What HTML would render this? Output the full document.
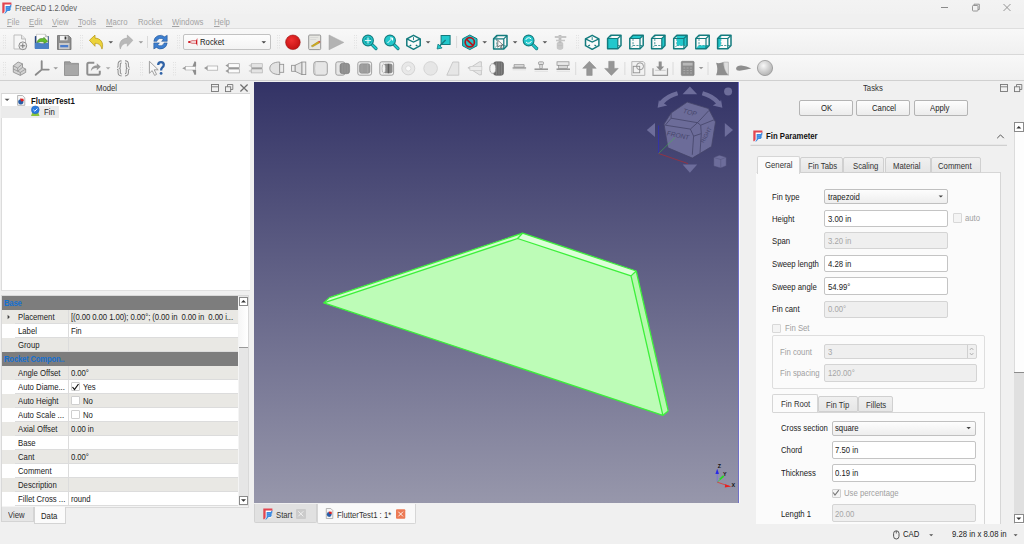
<!DOCTYPE html>
<html><head><meta charset="utf-8">
<style>
*{box-sizing:border-box;margin:0;padding:0}
html,body{width:1024px;height:544px;overflow:hidden;background:#f0f0f0;font-family:"Liberation Sans",sans-serif;font-size:8px;color:#1e1e1e}
.a{position:absolute}
.t{position:absolute;white-space:nowrap;line-height:10px;font-size:9px;transform:scaleX(0.86);transform-origin:0 0}
svg{position:absolute;overflow:visible}
#title{left:0;top:0;width:1024px;height:14px;background:linear-gradient(#f3f3f3,#f1f1f1)}
#menu{left:0;top:14px;width:1024px;height:15px;background:#f0f0f0;border-bottom:1px solid #dedede}
.menu{color:#a3a3a3;top:17.4px}
.menu u{text-decoration:underline;text-decoration-thickness:1px;text-underline-offset:0.6px}
#tb1{left:0;top:29px;width:1024px;height:26px;background:linear-gradient(#f8f8f8,#f0f0f0);border-bottom:1px solid #d8d8d8}
#tb2{left:0;top:55px;width:1024px;height:26px;background:linear-gradient(#f8f8f8,#f0f0f0);border-bottom:1px solid #d0d0d0}

</style></head><body>
<div id="title" class="a"></div>
<svg style="left:2px;top:2px" width="11" height="12" viewBox="0 0 11 12">
<rect x="2.4" y="2.4" width="6" height="7.2" fill="#fff"/>
<path d="M0.3 0.4H9.4V3.2L8.4 2.6H2.6V9.4L1.3 11.2H0.3Z" fill="#e24550"/>
<path d="M3.6 4H7.6L9.2 2.2 9.4 4.4 8.2 5.4H9.4L8 7.2H9.2L7.6 9H5.6L3.2 11.4H2.2L3.6 9.6Z" fill="#3b8ae0"/><path d="M4.6 5.6h2.6M4.6 7.6h2" stroke="#6aaaf0" stroke-width="0.6"/>
</svg>
<div class="t" style="left:14.6px;top:3.2px;color:#5a5a5a;transform:scaleX(0.83)">FreeCAD 1.2.0dev</div>
<svg style="left:0;top:0" width="1024" height="14">
<path d="M941 7.5h7" stroke="#8a8a8a" stroke-width="1"/>
<rect x="972.5" y="5.5" width="5.5" height="5.5" fill="none" stroke="#8a8a8a" stroke-width="0.9" rx="0.8"/>
<path d="M974 5.5v-1.3h5.3v5.3h-1.3" fill="none" stroke="#8a8a8a" stroke-width="0.9"/>
<path d="M1003.5 4l7 7M1010.5 4l-7 7" stroke="#8a8a8a" stroke-width="0.9"/>
</svg>
<div id="menu" class="a"></div>
<div class="t menu" style="left:6.6px"><u>F</u>ile</div>
<div class="t menu" style="left:28.5px"><u>E</u>dit</div>
<div class="t menu" style="left:51.5px"><u>V</u>iew</div>
<div class="t menu" style="left:77.5px"><u>T</u>ools</div>
<div class="t menu" style="left:106px"><u>M</u>acro</div>
<div class="t menu" style="left:138.2px">Rocket</div>
<div class="t menu" style="left:171.5px"><u>W</u>indows</div>
<div class="t menu" style="left:213.5px"><u>H</u>elp</div>
<div id="tb1" class="a"></div><div id="tb2" class="a"></div>
<div class="a" style="left:183px;top:34px;width:88px;height:15.5px;border:1px solid #c2c2c2;border-radius:2px;background:linear-gradient(#fdfdfd,#f3f3f3)"></div>
<svg style="left:187.5px;top:37px" width="10" height="10"><path d="M0.5 5L4 3.8h4.5V6.2H4z" fill="#fff" stroke="#c0141c" stroke-width="0.7"/><path d="M8 3.8L9.3 1v8L8 6.2z" fill="#d0141c"/><circle cx="1.2" cy="5" r="1" fill="#d0141c"/></svg>
<div class="t" style="left:199.5px;top:37px;color:#222">Rocket</div>
<svg style="left:0;top:0" width="1024" height="82"><rect x="3" y="35" width="0.8" height="0.8" fill="#d6d6d6"/><rect x="5" y="35" width="0.8" height="0.8" fill="#d6d6d6"/><rect x="3" y="37.5" width="0.8" height="0.8" fill="#d6d6d6"/><rect x="5" y="37.5" width="0.8" height="0.8" fill="#d6d6d6"/><rect x="3" y="40.0" width="0.8" height="0.8" fill="#d6d6d6"/><rect x="5" y="40.0" width="0.8" height="0.8" fill="#d6d6d6"/><rect x="3" y="42.5" width="0.8" height="0.8" fill="#d6d6d6"/><rect x="5" y="42.5" width="0.8" height="0.8" fill="#d6d6d6"/><rect x="3" y="45.0" width="0.8" height="0.8" fill="#d6d6d6"/><rect x="5" y="45.0" width="0.8" height="0.8" fill="#d6d6d6"/><rect x="3" y="47.5" width="0.8" height="0.8" fill="#d6d6d6"/><rect x="5" y="47.5" width="0.8" height="0.8" fill="#d6d6d6"/><g transform="translate(13,34.5) scale(1.0)"><path d="M1 0.5h7.5l4 4V14.5H1z" fill="#f6f6f6" stroke="#b8b8b8" stroke-width="0.9"/><path d="M8.5 0.5v4h4" fill="#e4e4e4" stroke="#b8b8b8" stroke-width="0.9"/><circle cx="9.8" cy="11.3" r="3.9" fill="#eee" stroke="#8c8c8c" stroke-width="1"/><path d="M9.8 8.8v5M7.3 11.3h5" stroke="#777" stroke-width="1"/></g><g transform="translate(34.5,34.5) scale(1.0)"><rect x="0.3" y="1.4" width="14" height="13" rx="0.8" fill="#1f3f7a"/><path d="M1.9 -0.2H10.8L13.4 2.4V9H1.9Z" fill="#fdfdfd" stroke="#a8a8a8" stroke-width="0.5"/><path d="M10.8 -0.2V2.4H13.4" fill="#d0d0d0" stroke="#999" stroke-width="0.4"/><path d="M2.2 8.8C2.8 4.8 6 3.4 9 4.2L9.4 2.8 13.2 6.8 9.6 9.4 9.4 7.6C7 6.8 4.5 7.2 2.2 8.8Z" fill="#62bd2c" stroke="#2d6a10" stroke-width="0.5"/><path d="M0.4 8.4Q3 7.4 5.2 8.6T9.6 9T14.3 8.4V14.4H0.4Z" fill="#4a80c6"/></g><g transform="translate(57,35.0) scale(1.0)"><path d="M0.5 0.5h11l2.5 2.5v11.5H0.5z" fill="#8e8e8e" stroke="#6e6e6e" stroke-width="0.8"/><rect x="3" y="0.8" width="7.5" height="4.5" fill="#f4f4f4"/><rect x="7.6" y="1.5" width="1.8" height="3" fill="#333"/><rect x="2" y="8" width="10.5" height="6.2" fill="#c9c9c9"/><rect x="3.2" y="10" width="8" height="2.3" fill="#4a7ccc"/></g><rect x="80" y="35" width="0.8" height="0.8" fill="#d6d6d6"/><rect x="82" y="35" width="0.8" height="0.8" fill="#d6d6d6"/><rect x="80" y="37.5" width="0.8" height="0.8" fill="#d6d6d6"/><rect x="82" y="37.5" width="0.8" height="0.8" fill="#d6d6d6"/><rect x="80" y="40.0" width="0.8" height="0.8" fill="#d6d6d6"/><rect x="82" y="40.0" width="0.8" height="0.8" fill="#d6d6d6"/><rect x="80" y="42.5" width="0.8" height="0.8" fill="#d6d6d6"/><rect x="82" y="42.5" width="0.8" height="0.8" fill="#d6d6d6"/><rect x="80" y="45.0" width="0.8" height="0.8" fill="#d6d6d6"/><rect x="82" y="45.0" width="0.8" height="0.8" fill="#d6d6d6"/><rect x="80" y="47.5" width="0.8" height="0.8" fill="#d6d6d6"/><rect x="82" y="47.5" width="0.8" height="0.8" fill="#d6d6d6"/><g transform="translate(88.8,34.5) scale(1.0)"><path d="M0.6 5.8L6.2 0.6V3.6C11.5 3.8 15.5 8 13.2 14.6 12 10.6 10 8.8 6.2 8.8V11.8z" fill="#ecd33a" stroke="#b39312" stroke-width="0.7" stroke-linejoin="round"/></g><path d="M108.5 41.2h4.6l-2.3 2.2z" fill="#555"/><g transform="translate(118.5,34.5) scale(1.0)"><path d="M14.4 5.8L8.8 0.6V3.6C3.5 3.8-0.5 8 1.8 14.6 3 10.6 5 8.8 8.8 8.8V11.8z" fill="#b9b9b9" stroke="#a0a0a0" stroke-width="0.5" stroke-linejoin="round"/></g><path d="M138.6 41.2h4.6l-2.3 2.2z" fill="#9a9a9a"/><path d="M147.5 36V48" stroke="#dadada" stroke-width="1"/><g transform="translate(153,34.5) scale(1.0)"><path d="M0.8 6.8A6.6 6.6 0 0 1 11.6 2.3L14.2 0.8V6.8H8.6L10.4 5A4 4 0 0 0 3.8 6.8Z" fill="#3d7fd0" stroke="#1e4f90" stroke-width="0.55" stroke-linejoin="round"/><path d="M14.2 8.4A6.6 6.6 0 0 1 3.4 12.9L0.8 14.4V8.4H6.4L4.6 10.2A4 4 0 0 0 11.2 8.4Z" fill="#3d7fd0" stroke="#1e4f90" stroke-width="0.55" stroke-linejoin="round"/></g><rect x="177" y="35" width="0.8" height="0.8" fill="#d6d6d6"/><rect x="179" y="35" width="0.8" height="0.8" fill="#d6d6d6"/><rect x="177" y="37.5" width="0.8" height="0.8" fill="#d6d6d6"/><rect x="179" y="37.5" width="0.8" height="0.8" fill="#d6d6d6"/><rect x="177" y="40.0" width="0.8" height="0.8" fill="#d6d6d6"/><rect x="179" y="40.0" width="0.8" height="0.8" fill="#d6d6d6"/><rect x="177" y="42.5" width="0.8" height="0.8" fill="#d6d6d6"/><rect x="179" y="42.5" width="0.8" height="0.8" fill="#d6d6d6"/><rect x="177" y="45.0" width="0.8" height="0.8" fill="#d6d6d6"/><rect x="179" y="45.0" width="0.8" height="0.8" fill="#d6d6d6"/><rect x="177" y="47.5" width="0.8" height="0.8" fill="#d6d6d6"/><rect x="179" y="47.5" width="0.8" height="0.8" fill="#d6d6d6"/><rect x="277" y="35" width="0.8" height="0.8" fill="#d6d6d6"/><rect x="279" y="35" width="0.8" height="0.8" fill="#d6d6d6"/><rect x="277" y="37.5" width="0.8" height="0.8" fill="#d6d6d6"/><rect x="279" y="37.5" width="0.8" height="0.8" fill="#d6d6d6"/><rect x="277" y="40.0" width="0.8" height="0.8" fill="#d6d6d6"/><rect x="279" y="40.0" width="0.8" height="0.8" fill="#d6d6d6"/><rect x="277" y="42.5" width="0.8" height="0.8" fill="#d6d6d6"/><rect x="279" y="42.5" width="0.8" height="0.8" fill="#d6d6d6"/><rect x="277" y="45.0" width="0.8" height="0.8" fill="#d6d6d6"/><rect x="279" y="45.0" width="0.8" height="0.8" fill="#d6d6d6"/><rect x="277" y="47.5" width="0.8" height="0.8" fill="#d6d6d6"/><rect x="279" y="47.5" width="0.8" height="0.8" fill="#d6d6d6"/><defs><radialGradient id="rg" cx="0.4" cy="0.35" r="0.7"><stop offset="0" stop-color="#f03030"/><stop offset="1" stop-color="#c01010"/></radialGradient><linearGradient id="gg" x1="0" y1="0" x2="0" y2="1"><stop offset="0" stop-color="#fdfdfd"/><stop offset="1" stop-color="#f0f0f0"/></linearGradient><radialGradient id="sph" cx="0.4" cy="0.35" r="0.75"><stop offset="0" stop-color="#f8f8f8"/><stop offset="1" stop-color="#a9a9a9"/></radialGradient></defs><circle cx="292.9" cy="42.3" r="7.3" fill="url(#rg)" stroke="#9a1010" stroke-width="0.6"/><g transform="translate(308.2,34.5) scale(1.0)"><rect x="0.5" y="0.5" width="12" height="14.6" rx="1" fill="#e7e7e2" stroke="#8b8b8b" stroke-width="0.9"/><path d="M2 3h8M2 5h6" stroke="#cfcfcf" stroke-width="0.6"/><path d="M3 11.5l7-4.5 1.5 1.3-7 4z" fill="#d4b21a" stroke="#8a6a00" stroke-width="0.4"/><path d="M10 7l1-0.7 1.3 1.2-0.8 0.8z" fill="#d33"/></g><path d="M329 35V49.8L343.8 42.4z" fill="#b3b3b3" stroke="#a4a4a4" stroke-width="0.5"/><rect x="354" y="35" width="0.8" height="0.8" fill="#d6d6d6"/><rect x="356" y="35" width="0.8" height="0.8" fill="#d6d6d6"/><rect x="354" y="37.5" width="0.8" height="0.8" fill="#d6d6d6"/><rect x="356" y="37.5" width="0.8" height="0.8" fill="#d6d6d6"/><rect x="354" y="40.0" width="0.8" height="0.8" fill="#d6d6d6"/><rect x="356" y="40.0" width="0.8" height="0.8" fill="#d6d6d6"/><rect x="354" y="42.5" width="0.8" height="0.8" fill="#d6d6d6"/><rect x="356" y="42.5" width="0.8" height="0.8" fill="#d6d6d6"/><rect x="354" y="45.0" width="0.8" height="0.8" fill="#d6d6d6"/><rect x="356" y="45.0" width="0.8" height="0.8" fill="#d6d6d6"/><rect x="354" y="47.5" width="0.8" height="0.8" fill="#d6d6d6"/><rect x="356" y="47.5" width="0.8" height="0.8" fill="#d6d6d6"/><g transform="translate(362,34.5) scale(1.0)"><path d="M9.8 9.8L14 14" stroke="#137b7e" stroke-width="3.2" stroke-linecap="round"/><path d="M9.8 9.8L14 14" stroke="#22c8cc" stroke-width="1.8" stroke-linecap="round"/><circle cx="6" cy="6" r="5.4" fill="#22c8cc" stroke="#137b7e" stroke-width="1.1"/><circle cx="6" cy="6" r="3.2" fill="none" stroke="#0e6a6a" stroke-width="0.5"/><path d="M6 2.8v6.4M2.8 6h6.4" stroke="#eafafa" stroke-width="0.9"/></g><g transform="translate(384,34.5) scale(1.0)"><path d="M9.8 9.8L14 14" stroke="#137b7e" stroke-width="3.2" stroke-linecap="round"/><path d="M9.8 9.8L14 14" stroke="#22c8cc" stroke-width="1.8" stroke-linecap="round"/><circle cx="6" cy="6" r="5.4" fill="#22c8cc" stroke="#137b7e" stroke-width="1.1"/><path d="M3.5 8.5L8.5 3.5M6 3.5h2.5V6" stroke="#fff" stroke-width="1" fill="none"/></g><g transform="translate(406,34.5) scale(1.0)"><polygon points="7.5,0.8 14.2,4.4 14.2,11.2 7.5,14.8 0.8,11.2 0.8,4.4" fill="#fafafa" stroke="#137b7e" stroke-width="1.5" stroke-linejoin="round"/><path d="M0.8 4.4L7.5 7.6L14.2 4.4" fill="none" stroke="#137b7e" stroke-width="1.2"/><path d="M7.5 2.6v3" stroke="#137b7e" stroke-width="0.9"/><path d="M3.6 11.6L5.2 10.4M11.4 11.6L9.8 10.4" stroke="#137b7e" stroke-width="1.3"/></g><path d="M425.8 41.2h4.6l-2.3 2.2z" fill="#555"/><g transform="translate(436.6,34.5) scale(1.0)"><rect x="4.5" y="1" width="9" height="9" fill="#22c8cc" stroke="#137b7e" stroke-width="1"/><path d="M9 5.5L3 11.5" stroke="#137b7e" stroke-width="1.3"/><path d="M0.5 14.5l1-5 4 4z" fill="#22c8cc" stroke="#137b7e" stroke-width="0.8"/></g><path d="M456.6 36V48" stroke="#dadada" stroke-width="1"/><g transform="translate(462,34.5) scale(1.0)"><polygon points="7.8,0.5 15,4.3 15,11.3 7.8,15.1 0.6,11.3 0.6,4.3" fill="#22c8cc" stroke="#137b7e" stroke-width="1"/><circle cx="7.8" cy="7.8" r="4.6" fill="none" stroke="#b2151c" stroke-width="1.7"/><path d="M4.6 4.8L11 10.8" stroke="#b2151c" stroke-width="1.7"/></g><path d="M482.4 41.2h4.6l-2.3 2.2z" fill="#555"/><g transform="translate(492.8,34.8) scale(1.0)"><polygon points="0.8,4 4,0.8 14.2,0.8 14.2,11 11,14.2 0.8,14.2" fill="#fafafa"/><path d="M4 0.8V11H14.2M4 11L0.8 14.2" fill="none" stroke="#137b7e" stroke-width="0.75" stroke-dasharray="2.2 1.2"/><path d="M0.8 4H11V14.2M11 4L14.2 0.8" fill="none" stroke="#137b7e" stroke-width="1.2"/><polygon points="0.8,4 4,0.8 14.2,0.8 14.2,11 11,14.2 0.8,14.2" fill="none" stroke="#137b7e" stroke-width="1.5" stroke-linejoin="round"/><path d="M5 5.5v7l1.8-1.8 1.5 3 1-0.5-1.4-2.9h2.5z" fill="#fff" stroke="#333" stroke-width="0.6"/></g><path d="M512.8 41.2h4.6l-2.3 2.2z" fill="#555"/><g transform="translate(522.6,34.5) scale(1.0)"><path d="M9.8 9.8L14 14" stroke="#137b7e" stroke-width="3.2" stroke-linecap="round"/><path d="M9.8 9.8L14 14" stroke="#22c8cc" stroke-width="1.8" stroke-linecap="round"/><circle cx="6" cy="6" r="5.4" fill="#22c8cc" stroke="#137b7e" stroke-width="1.1"/><path d="M3.2 5.5A3 3 0 0 1 8.6 4.6M8.8 6.5A3 3 0 0 1 3.4 7.4" stroke="#fff" stroke-width="1" fill="none"/></g><path d="M542.6 41.2h4.6l-2.3 2.2z" fill="#555"/><g transform="translate(554,34.5) scale(1.0)"><rect x="4.6" y="0.5" width="2.8" height="14.5" fill="#bdbdbd"/><path d="M0.8 1.5h11.5v2H0.8zM2 5.2h9v1.6H2z" fill="#c6c6c6"/><rect x="3.2" y="8" width="5.6" height="6.5" rx="1" fill="#cfcfcf" stroke="#b0b0b0" stroke-width="0.5"/><path d="M3.6 9.5h4.8M3.6 11h4.8M3.6 12.5h4.8" stroke="#aaa" stroke-width="0.4"/></g><rect x="576" y="35" width="0.8" height="0.8" fill="#d6d6d6"/><rect x="578" y="35" width="0.8" height="0.8" fill="#d6d6d6"/><rect x="576" y="37.5" width="0.8" height="0.8" fill="#d6d6d6"/><rect x="578" y="37.5" width="0.8" height="0.8" fill="#d6d6d6"/><rect x="576" y="40.0" width="0.8" height="0.8" fill="#d6d6d6"/><rect x="578" y="40.0" width="0.8" height="0.8" fill="#d6d6d6"/><rect x="576" y="42.5" width="0.8" height="0.8" fill="#d6d6d6"/><rect x="578" y="42.5" width="0.8" height="0.8" fill="#d6d6d6"/><rect x="576" y="45.0" width="0.8" height="0.8" fill="#d6d6d6"/><rect x="578" y="45.0" width="0.8" height="0.8" fill="#d6d6d6"/><rect x="576" y="47.5" width="0.8" height="0.8" fill="#d6d6d6"/><rect x="578" y="47.5" width="0.8" height="0.8" fill="#d6d6d6"/><g transform="translate(584.7,34.5) scale(1.0)"><polygon points="7.5,0.8 14.2,4.4 14.2,11.2 7.5,14.8 0.8,11.2 0.8,4.4" fill="#fafafa" stroke="#137b7e" stroke-width="1.5" stroke-linejoin="round"/><path d="M0.8 4.4L7.5 7.6L14.2 4.4" fill="none" stroke="#137b7e" stroke-width="1.2"/><path d="M7.5 2.6v3" stroke="#137b7e" stroke-width="0.9"/><path d="M3.6 11.6L5.2 10.4M11.4 11.6L9.8 10.4" stroke="#137b7e" stroke-width="1.3"/></g><g transform="translate(606.8,34.5) scale(1.0)"><polygon points="0.8,4 4,0.8 14.2,0.8 14.2,11 11,14.2 0.8,14.2" fill="#fafafa"/><path d="M4 0.8V11H14.2M4 11L0.8 14.2" fill="none" stroke="#137b7e" stroke-width="0.75" stroke-dasharray="2.2 1.2"/><polygon points="0.8,4 11,4 11,14.2 0.8,14.2" fill="#22c8cc"/><path d="M0.8 4H11V14.2M11 4L14.2 0.8" fill="none" stroke="#137b7e" stroke-width="1.2"/><polygon points="0.8,4 4,0.8 14.2,0.8 14.2,11 11,14.2 0.8,14.2" fill="none" stroke="#137b7e" stroke-width="1.5" stroke-linejoin="round"/></g><g transform="translate(629,34.5) scale(1.0)"><polygon points="0.8,4 4,0.8 14.2,0.8 14.2,11 11,14.2 0.8,14.2" fill="#fafafa"/><path d="M4 0.8V11H14.2M4 11L0.8 14.2" fill="none" stroke="#137b7e" stroke-width="0.75" stroke-dasharray="2.2 1.2"/><polygon points="0.8,4 4,0.8 14.2,0.8 11,4" fill="#22c8cc"/><path d="M0.8 4H11V14.2M11 4L14.2 0.8" fill="none" stroke="#137b7e" stroke-width="1.2"/><polygon points="0.8,4 4,0.8 14.2,0.8 14.2,11 11,14.2 0.8,14.2" fill="none" stroke="#137b7e" stroke-width="1.5" stroke-linejoin="round"/></g><g transform="translate(650.8,34.5) scale(1.0)"><polygon points="0.8,4 4,0.8 14.2,0.8 14.2,11 11,14.2 0.8,14.2" fill="#fafafa"/><path d="M4 0.8V11H14.2M4 11L0.8 14.2" fill="none" stroke="#137b7e" stroke-width="0.75" stroke-dasharray="2.2 1.2"/><polygon points="11,4 14.2,0.8 14.2,11 11,14.2" fill="#22c8cc"/><path d="M0.8 4H11V14.2M11 4L14.2 0.8" fill="none" stroke="#137b7e" stroke-width="1.2"/><polygon points="0.8,4 4,0.8 14.2,0.8 14.2,11 11,14.2 0.8,14.2" fill="none" stroke="#137b7e" stroke-width="1.5" stroke-linejoin="round"/></g><g transform="translate(672.9,34.5) scale(1.0)"><polygon points="0.8,4 4,0.8 14.2,0.8 14.2,11 11,14.2 0.8,14.2" fill="#fafafa"/><path d="M4 0.8V11H14.2M4 11L0.8 14.2" fill="none" stroke="#137b7e" stroke-width="0.75" stroke-dasharray="2.2 1.2"/><polygon points="4,0.8 14.2,0.8 14.2,11 4,11" fill="#22c8cc"/><path d="M0.8 4H11V14.2M11 4L14.2 0.8" fill="none" stroke="#137b7e" stroke-width="1.2"/><polygon points="0.8,4 4,0.8 14.2,0.8 14.2,11 11,14.2 0.8,14.2" fill="none" stroke="#137b7e" stroke-width="1.5" stroke-linejoin="round"/></g><g transform="translate(695,34.5) scale(1.0)"><polygon points="0.8,4 4,0.8 14.2,0.8 14.2,11 11,14.2 0.8,14.2" fill="#fafafa"/><path d="M4 0.8V11H14.2M4 11L0.8 14.2" fill="none" stroke="#137b7e" stroke-width="0.75" stroke-dasharray="2.2 1.2"/><polygon points="0.8,14.2 4,11 14.2,11 11,14.2" fill="#22c8cc"/><path d="M0.8 4H11V14.2M11 4L14.2 0.8" fill="none" stroke="#137b7e" stroke-width="1.2"/><polygon points="0.8,4 4,0.8 14.2,0.8 14.2,11 11,14.2 0.8,14.2" fill="none" stroke="#137b7e" stroke-width="1.5" stroke-linejoin="round"/></g><g transform="translate(716.8,34.5) scale(1.0)"><polygon points="0.8,4 4,0.8 14.2,0.8 14.2,11 11,14.2 0.8,14.2" fill="#fafafa"/><path d="M4 0.8V11H14.2M4 11L0.8 14.2" fill="none" stroke="#137b7e" stroke-width="0.75" stroke-dasharray="2.2 1.2"/><polygon points="0.8,4 4,0.8 4,11 0.8,14.2" fill="#22c8cc"/><path d="M0.8 4H11V14.2M11 4L14.2 0.8" fill="none" stroke="#137b7e" stroke-width="1.2"/><polygon points="0.8,4 4,0.8 14.2,0.8 14.2,11 11,14.2 0.8,14.2" fill="none" stroke="#137b7e" stroke-width="1.5" stroke-linejoin="round"/></g><rect x="3" y="62" width="0.8" height="0.8" fill="#d6d6d6"/><rect x="5" y="62" width="0.8" height="0.8" fill="#d6d6d6"/><rect x="3" y="64.5" width="0.8" height="0.8" fill="#d6d6d6"/><rect x="5" y="64.5" width="0.8" height="0.8" fill="#d6d6d6"/><rect x="3" y="67.0" width="0.8" height="0.8" fill="#d6d6d6"/><rect x="5" y="67.0" width="0.8" height="0.8" fill="#d6d6d6"/><rect x="3" y="69.5" width="0.8" height="0.8" fill="#d6d6d6"/><rect x="5" y="69.5" width="0.8" height="0.8" fill="#d6d6d6"/><rect x="3" y="72.0" width="0.8" height="0.8" fill="#d6d6d6"/><rect x="5" y="72.0" width="0.8" height="0.8" fill="#d6d6d6"/><rect x="3" y="74.5" width="0.8" height="0.8" fill="#d6d6d6"/><rect x="5" y="74.5" width="0.8" height="0.8" fill="#d6d6d6"/><g transform="translate(12.7,60.8) scale(1.0)"><path d="M0.6 5L5.4 1.2 9.8 3V6.6L13 8.2V11.6L7.6 14.6 0.6 11.4Z" fill="#d2d2d2" stroke="#8a8a8a" stroke-width="0.8" stroke-linejoin="round"/><path d="M0.6 5L5 7.2 9.8 3M5 7.2V10.4M0.6 8.2L5 10.4 9.8 6.6M5 10.4L7.6 11.6 13 8.2M7.6 11.6V14.6" fill="none" stroke="#8a8a8a" stroke-width="0.7"/></g><g transform="translate(34.7,60.8) scale(1.0)"><path d="M7 0.5V8.8M7 8.8H14M7 8.8L1 14" stroke="#8a8a8a" stroke-width="1.9" stroke-linecap="round"/></g><path d="M53.4 67.2h4.6l-2.3 2.2z" fill="#9a9a9a"/><g transform="translate(64,60.8) scale(1.0)"><path d="M0.5 1h5.5l1.5 1.6h7v12H0.5z" fill="#9e9e9e" stroke="#858585" stroke-width="0.8"/><rect x="0.9" y="4" width="13.6" height="10.2" fill="#a8a8a8"/></g><g transform="translate(86.3,60.8) scale(1.0)"><path d="M8 2H2.5Q1 2 1 3.5v9.5Q1 14 2.5 14h9.5q1.5 0 1.5-1.5V10" fill="none" stroke="#8e8e8e" stroke-width="2"/><path d="M4.5 10.5C5 6 8 4.6 10.5 4.8V2.5L14.5 6 10.5 9.5V7.3C8 7.2 6 8 4.5 10.5z" fill="#9a9a9a"/></g><path d="M105.8 67.2h4.6l-2.3 2.2z" fill="#aaa"/><g transform="translate(116,60.8) scale(1.0)"><path d="M5.5 1Q3.2 1 3.2 3.2V5.8Q3.2 7.5 1 7.5Q3.2 7.5 3.2 9.2V11.8Q3.2 14 5.5 14M9 1Q11.3 1 11.3 3.2V5.8Q11.3 7.5 13.5 7.5Q11.3 7.5 11.3 9.2V11.8Q11.3 14 9 14" fill="none" stroke="#8a8a8a" stroke-width="3.2"/><path d="M5.5 1Q3.2 1 3.2 3.2V5.8Q3.2 7.5 1 7.5Q3.2 7.5 3.2 9.2V11.8Q3.2 14 5.5 14M9 1Q11.3 1 11.3 3.2V5.8Q11.3 7.5 13.5 7.5Q11.3 7.5 11.3 9.2V11.8Q11.3 14 9 14" fill="none" stroke="#eeeeee" stroke-width="1.3"/></g><rect x="140" y="62" width="0.8" height="0.8" fill="#d6d6d6"/><rect x="142" y="62" width="0.8" height="0.8" fill="#d6d6d6"/><rect x="140" y="64.5" width="0.8" height="0.8" fill="#d6d6d6"/><rect x="142" y="64.5" width="0.8" height="0.8" fill="#d6d6d6"/><rect x="140" y="67.0" width="0.8" height="0.8" fill="#d6d6d6"/><rect x="142" y="67.0" width="0.8" height="0.8" fill="#d6d6d6"/><rect x="140" y="69.5" width="0.8" height="0.8" fill="#d6d6d6"/><rect x="142" y="69.5" width="0.8" height="0.8" fill="#d6d6d6"/><rect x="140" y="72.0" width="0.8" height="0.8" fill="#d6d6d6"/><rect x="142" y="72.0" width="0.8" height="0.8" fill="#d6d6d6"/><rect x="140" y="74.5" width="0.8" height="0.8" fill="#d6d6d6"/><rect x="142" y="74.5" width="0.8" height="0.8" fill="#d6d6d6"/><g transform="translate(148.6,60.8) scale(1.0)"><path d="M0.8 0.5v12l2.8-2.7 2.4 4.8 2-1-2.4-4.6h4z" fill="#f6f6f6" stroke="#8a8a8a" stroke-width="0.8"/><path d="M9.6 4.2Q9.6 1.3 12.4 1.3Q15.2 1.3 15.2 4Q15.2 5.8 13.6 6.8Q12.5 7.6 12.5 9.6" fill="none" stroke="#2f62a6" stroke-width="2.3"/><circle cx="12.5" cy="12.6" r="1.4" fill="#2f62a6"/></g><rect x="173" y="62" width="0.8" height="0.8" fill="#d6d6d6"/><rect x="175" y="62" width="0.8" height="0.8" fill="#d6d6d6"/><rect x="173" y="64.5" width="0.8" height="0.8" fill="#d6d6d6"/><rect x="175" y="64.5" width="0.8" height="0.8" fill="#d6d6d6"/><rect x="173" y="67.0" width="0.8" height="0.8" fill="#d6d6d6"/><rect x="175" y="67.0" width="0.8" height="0.8" fill="#d6d6d6"/><rect x="173" y="69.5" width="0.8" height="0.8" fill="#d6d6d6"/><rect x="175" y="69.5" width="0.8" height="0.8" fill="#d6d6d6"/><rect x="173" y="72.0" width="0.8" height="0.8" fill="#d6d6d6"/><rect x="175" y="72.0" width="0.8" height="0.8" fill="#d6d6d6"/><rect x="173" y="74.5" width="0.8" height="0.8" fill="#d6d6d6"/><rect x="175" y="74.5" width="0.8" height="0.8" fill="#d6d6d6"/><g transform="translate(181.8,60.8) scale(1.0)"><path d="M0.4 7.4L3.8 5.6V9.2z" fill="#9a9a9a"/><rect x="3.8" y="5.6" width="10" height="3.6" fill="#fbfbfb" stroke="#a8a8a8" stroke-width="0.6"/><path d="M10.6 5.6L12.8 0.5 14.3 1.2V5.6zM10.6 9.2L12.8 14.3 14.3 13.6V9.2z" fill="#8e8e8e"/></g><g transform="translate(203.6,60.8) scale(1.0)"><path d="M0.4 7.3L3.8 5.2V9.4z" fill="#9a9a9a"/><rect x="3.8" y="5.2" width="10.3" height="4.2" fill="#fbfbfb" stroke="#a8a8a8" stroke-width="0.7"/></g><g transform="translate(225,60.8) scale(1.0)"><path d="M0.4 4.8L3.5 2.9V6.7zM0.4 10.2L3.5 8.3V12.1z" fill="#9a9a9a"/><rect x="3.5" y="2.9" width="10.8" height="3.8" fill="#fbfbfb" stroke="#9e9e9e" stroke-width="0.7"/><rect x="3.5" y="8.3" width="10.8" height="3.8" fill="#fbfbfb" stroke="#9e9e9e" stroke-width="0.7"/><path d="M3.5 7.5h10.8" stroke="#7a7a7a" stroke-width="0.9"/></g><g transform="translate(248,60.8) scale(1.0)"><path d="M0.4 4.8L3.5 2.9V6.7zM0.4 10.2L3.5 8.3V12.1z" fill="#cfcfcf"/><rect x="3.5" y="2.9" width="10.8" height="3.8" fill="#e4e4e4" stroke="#b4b4b4" stroke-width="0.7"/><rect x="3.5" y="8.3" width="10.8" height="3.8" fill="#e4e4e4" stroke="#b4b4b4" stroke-width="0.7"/><path d="M3.5 7.5h10.8" stroke="#858585" stroke-width="0.9"/></g><g transform="translate(269.2,60.8) scale(1.0)"><path d="M10.5 1.2C4 1.2 0.6 4 0.6 7.5S4 13.8 10.5 13.8z" fill="#e2e2e2" stroke="#8d8d8d" stroke-width="0.8"/><rect x="10.5" y="3.5" width="4" height="8" fill="#ececec" stroke="#8d8d8d" stroke-width="0.8"/></g><g transform="translate(291,60.8) scale(1.0)"><path d="M4 4.5L11 1.2V13.8L4 10.5z" fill="#e4e4e4" stroke="#8d8d8d" stroke-width="0.8"/><rect x="0.6" y="4.5" width="3.4" height="6" fill="#ececec" stroke="#8d8d8d" stroke-width="0.8"/><rect x="11" y="1.2" width="3.8" height="12.6" fill="#ececec" stroke="#8d8d8d" stroke-width="0.8"/></g><g transform="translate(313,60.8) scale(1.0)"><rect x="0.8" y="0.8" width="13.5" height="13.6" rx="2.5" fill="#e6e6e6" stroke="#8d8d8d" stroke-width="0.8"/><path d="M2.5 1.2Q0.8 7.5 2.5 14" fill="none" stroke="#bbb" stroke-width="0.6"/></g><g transform="translate(335,60.8) scale(1.0)"><rect x="0.8" y="1" width="9" height="13.4" rx="2" fill="#e6e6e6" stroke="#8d8d8d" stroke-width="0.8"/><rect x="5" y="2.5" width="9.6" height="10.4" rx="2.5" fill="#8e8e8e" stroke="#777" stroke-width="0.6"/><path d="M7.5 3v9.5M10 3v9.5M12.5 3v9.5" stroke="#999" stroke-width="0.5"/></g><g transform="translate(357,60.8) scale(1.0)"><rect x="0.8" y="1" width="13.8" height="13.4" rx="2" fill="#efefef" stroke="#8d8d8d" stroke-width="0.8"/><rect x="2.5" y="3" width="10.5" height="9.4" rx="2" fill="#9c9c9c" stroke="#888" stroke-width="0.6"/><path d="M5 3v9.5M10.5 3v9.5" stroke="#aaa" stroke-width="0.6"/></g><g transform="translate(379,60.8) scale(1.0)"><rect x="0.8" y="1" width="13.8" height="13.4" rx="2" fill="#efefef" stroke="#8d8d8d" stroke-width="0.8"/><rect x="4.5" y="3" width="9" height="9.4" rx="2" fill="#8a8a8a"/><ellipse cx="4.8" cy="7.7" rx="1.8" ry="4.6" fill="#f2f2f2" stroke="#888" stroke-width="0.5"/><path d="M9.5 3v9.5" stroke="#5e5e5e" stroke-width="1.5"/></g><g transform="translate(401,60.8) scale(1.0)"><circle cx="7.3" cy="7.6" r="6.5" fill="#e8e8e8" stroke="#cdcdcd" stroke-width="0.8"/><circle cx="7.3" cy="7.6" r="2.6" fill="#fafafa" stroke="#cdcdcd" stroke-width="0.6"/></g><g transform="translate(423.3,60.8) scale(1.0)"><circle cx="7.3" cy="7.6" r="6.8" fill="#e6e6e6" stroke="#cfcfcf" stroke-width="0.8"/></g><g transform="translate(446,60.8) scale(1.0)"><path d="M0.8 14.4L6.8 1.2h6v13.2z" fill="#e6e6e6" stroke="#c0c0c0" stroke-width="0.8"/></g><g transform="translate(467.4,60.8) scale(1.0)"><path d="M0.5 7L5 5.5 12 1h2V14h-2L5 9.5z" fill="#e6e6e6" stroke="#bdbdbd" stroke-width="0.8"/><rect x="2.5" y="5.5" width="12" height="4" fill="#ececec" stroke="#c4c4c4" stroke-width="0.6"/></g><g transform="translate(489,60.8) scale(1.0)"><rect x="4.5" y="1" width="10" height="13.5" rx="2.5" fill="#6f6f6f" stroke="#5b5b5b" stroke-width="0.6"/><path d="M7.5 1.5v12.5M10 1.5v12.5M12.5 1.5v12.5" stroke="#8e8e8e" stroke-width="0.6"/><ellipse cx="3.8" cy="7.7" rx="3" ry="4.8" fill="#f4f4f4" stroke="#8e8e8e" stroke-width="0.7"/></g><g transform="translate(511.6,60.8) scale(1.0)"><path d="M2.5 3.8h10v2.5h-10z" fill="#dedede" stroke="#8c8c8c" stroke-width="0.7"/><path d="M1 6.5h13.5v1.3H1z" fill="#8e8e8e"/><path d="M1 9h13.5" stroke="#e2e2e2" stroke-width="1"/></g><g transform="translate(533.5,60.8) scale(1.0)"><rect x="5" y="1" width="5" height="2.8" rx="0.8" fill="#e0e0e0" stroke="#8c8c8c" stroke-width="0.7"/><rect x="6.3" y="3.8" width="2.4" height="4" fill="#ddd" stroke="#8c8c8c" stroke-width="0.6"/><path d="M1 8.4h13.5" stroke="#8e8e8e" stroke-width="1.4"/><path d="M1 10.5h13.5" stroke="#e0e0e0" stroke-width="1"/></g><g transform="translate(555.5,60.8) scale(1.0)"><rect x="1.5" y="1" width="12" height="3.5" fill="#e8e8e8" stroke="#8c8c8c" stroke-width="0.7"/><rect x="3" y="4.5" width="9" height="3" fill="#d8d8d8" stroke="#8c8c8c" stroke-width="0.6"/><path d="M1 8.4h13.5" stroke="#8e8e8e" stroke-width="1.4"/><path d="M1 10.5h13.5" stroke="#e0e0e0" stroke-width="1"/></g><path d="M575.7 62V75" stroke="#dadada" stroke-width="1"/><g transform="translate(582.7,60.8) scale(1.0)"><path d="M6.7 0.5L13.5 7.5H9.5V14.6H4V7.5H0z" fill="#969696" stroke="#8a8a8a" stroke-width="0.5"/></g><g transform="translate(604.7,60.8) scale(1.0)"><path d="M6.7 14.6L13.5 7.6H9.5V0.5H4V7.6H0z" fill="#969696" stroke="#8a8a8a" stroke-width="0.5"/></g><path d="M624.9 62V75" stroke="#dadada" stroke-width="1"/><g transform="translate(631,60.8) scale(1.0)"><path d="M0.8 0.8h11.5l1.5 1.5v12.3H0.8z" fill="#f2f2f2" stroke="#a8a8a8" stroke-width="0.8"/><rect x="2.2" y="5.5" width="6.5" height="6.5" fill="none" stroke="#8f8f8f" stroke-width="0.9"/><circle cx="9" cy="5.5" r="3.5" fill="none" stroke="#8f8f8f" stroke-width="0.9"/></g><g transform="translate(652.2,60.8) scale(1.0)"><path d="M0.8 7.5v7h14.5v-7" fill="#f0f0f0" stroke="#9a9a9a" stroke-width="1.2"/><path d="M3 9.5h10.5" stroke="#c8c8c8" stroke-width="1"/><path d="M6.5 0.8h3v5h2.5L8 10 4 5.8h2.5z" fill="#8e8e8e"/></g><path d="M673 62V75" stroke="#dadada" stroke-width="1"/><g transform="translate(680.8,60.8) scale(1.0)"><rect x="0.5" y="0.5" width="12.8" height="14.3" rx="1" fill="#8c8c8c" stroke="#7a7a7a" stroke-width="0.6"/><rect x="2" y="2" width="9.8" height="2.8" fill="#b8b8b8"/><path d="M2.5 7.2h2M5.8 7.2h2M9.2 7.2h2M2.5 9.7h2M5.8 9.7h2M9.2 9.7h2M2.5 12.2h2M5.8 12.2h2M9.2 12.2h2" stroke="#a8a8a8" stroke-width="1.1"/></g><path d="M698.8 67.1h4.6l-2.3 2.2z" fill="#9a9a9a"/><path d="M708 62V75" stroke="#dadada" stroke-width="1"/><g transform="translate(715.6,61.3) scale(1.0)"><path d="M0.5 1.5Q4 2.5 8 0.8 8 9 12.8 14H0.5Q3 8.5 0.5 1.5z" fill="#8e8e8e"/><path d="M8 0.8h4.8V14Q8 9 8 0.8z" fill="#dedede" stroke="#9a9a9a" stroke-width="0.5"/></g><g transform="translate(735.5,60.8) scale(1.0)"><path d="M0.6 7.5Q1.5 4.5 6 4.8 11 5.2 15.8 7.6 10 8.8 4 10 0.4 10 0.6 7.5z" fill="#8e8e8e"/></g><circle cx="765" cy="68" r="7.6" fill="url(#sph)" stroke="#8c8c8c" stroke-width="0.7"/></svg>
<svg style="left:0;top:0" width="1" height="1"><path d="M261.5 41.2h4.6l-2.3 2.2z" fill="#444"/></svg>
<div class="t" style="left:95.5px;top:83px;color:#333">Model</div>
<svg style="left:0;top:0" width="1" height="1">
<rect x="211.5" y="84.5" width="7" height="7" fill="none" stroke="#777" stroke-width="0.9"/><path d="M211.5 86.8h7" stroke="#777" stroke-width="0.9"/>
<rect x="225.5" y="86.8" width="5.2" height="4.8" fill="none" stroke="#777" stroke-width="0.9"/><path d="M227.5 86.8v-2.3h5.3v5h-2.1" fill="none" stroke="#777" stroke-width="0.9"/>
<path d="M240.4 84.5l7.2 7M247.6 84.5l-7.2 7" stroke="#707070" stroke-width="1.25"/>
</svg>
<div class="a" style="left:1px;top:93px;width:249px;height:198px;background:#fff;border-top:1px solid #d6d6d6;border-left:1px solid #dcdcdc;border-bottom:1px solid #e0e0e0"></div>
<div class="a" style="left:1px;top:106px;width:58px;height:11.5px;background:#ebebeb"></div>
<svg style="left:0;top:0" width="1" height="1">
<path d="M4.6 98.8h5l-2.5 2.2z" fill="#555"/>
<path d="M17.6 95.5h5l2.2 2.2v7.6h-7.2z" fill="#f8f8f8" stroke="#9a9a9a" stroke-width="0.7"/>
<circle cx="20.8" cy="101.8" r="2.6" fill="#2a5da6"/><path d="M20 98.6l3.4 0.2 0.4 2.2-2.6 0.4z" fill="#e02020"/>
<path d="M31 116h8.5l-1.2-3.5h-6z" fill="#8ac43a"/>
<circle cx="35.3" cy="109.8" r="3.9" fill="#2a7ae0" stroke="#1f5fb8" stroke-width="0.5"/><path d="M33.4 109.8l1.4 1.4 2.6-2.6" fill="none" stroke="#fff" stroke-width="0.9"/>
</svg>
<div class="t" style="left:30.8px;top:95.6px;font-weight:bold;color:#111">FlutterTest1</div>
<div class="t" style="left:44px;top:107.4px;color:#222">Fin</div>
<div class="a" style="left:1px;top:294.5px;width:248px;height:213px;background:#f4f4f4;border:1px solid #d9d9d9"></div>
<div class="a" style="left:2px;top:296px;width:236px;height:14px;background:#7d7d7d"></div>
<div class="t" style="left:4.2px;top:298.2px;color:#1670d0;font-weight:bold;letter-spacing:-0.25px">Base</div>
<div class="a" style="left:2px;top:310px;width:236px;height:14px;background:#e9e8e4"></div>
<div class="a" style="left:15px;top:323px;width:223px;height:1px;background:#dcdcdc"></div>
<div class="a" style="left:67.5px;top:310px;width:1px;height:14px;background:#dcdcdc"></div>
<div class="t" style="left:17.5px;top:312.4px;color:#222">Placement</div>
<div class="t" style="left:70.7px;top:312.4px;color:#222;letter-spacing:-0.1px">[(0.00 0.00 1.00); 0.00°; (0.00 in&nbsp; 0.00 in&nbsp; 0.00 i...</div>
<svg style="left:0;top:0" width="1" height="1"><path d="M7.6 314.8l2.3 2.2-2.3 2.2z" fill="#444"/></svg>
<div class="a" style="left:2px;top:324px;width:236px;height:14px;background:#ffffff"></div>
<div class="a" style="left:15px;top:337px;width:223px;height:1px;background:#dcdcdc"></div>
<div class="a" style="left:67.5px;top:324px;width:1px;height:14px;background:#dcdcdc"></div>
<div class="t" style="left:17.5px;top:326.4px;color:#222">Label</div>
<div class="t" style="left:70.7px;top:326.4px;color:#222;letter-spacing:-0.1px">Fin</div>
<div class="a" style="left:2px;top:338px;width:236px;height:14px;background:#e9e8e4"></div>
<div class="a" style="left:15px;top:351px;width:223px;height:1px;background:#dcdcdc"></div>
<div class="a" style="left:67.5px;top:338px;width:1px;height:14px;background:#dcdcdc"></div>
<div class="t" style="left:17.5px;top:340.4px;color:#222">Group</div>
<div class="a" style="left:2px;top:352px;width:236px;height:14px;background:#7d7d7d"></div>
<div class="t" style="left:4.2px;top:354.2px;color:#1670d0;font-weight:bold;letter-spacing:-0.25px">Rocket Compon..</div>
<div class="a" style="left:2px;top:366px;width:236px;height:14px;background:#e9e8e4"></div>
<div class="a" style="left:15px;top:379px;width:223px;height:1px;background:#dcdcdc"></div>
<div class="a" style="left:67.5px;top:366px;width:1px;height:14px;background:#dcdcdc"></div>
<div class="t" style="left:17.5px;top:368.4px;color:#222">Angle Offset</div>
<div class="t" style="left:70.7px;top:368.4px;color:#222;letter-spacing:-0.1px">0.00°</div>
<div class="a" style="left:2px;top:380px;width:236px;height:14px;background:#ffffff"></div>
<div class="a" style="left:15px;top:393px;width:223px;height:1px;background:#dcdcdc"></div>
<div class="a" style="left:67.5px;top:380px;width:1px;height:14px;background:#dcdcdc"></div>
<div class="t" style="left:17.5px;top:382.4px;color:#222">Auto Diame...</div>
<div class="a" style="left:70.5px;top:381.8px;width:9px;height:9.5px;background:#fff;border:1px solid #cfcfcf;border-radius:1px"></div>
<svg style="left:71px;top:383px" width="9" height="8"><path d="M1.5 4l2 2.6 4-5.6" fill="none" stroke="#111" stroke-width="1.2"/></svg>
<div class="t" style="left:83px;top:382.4px;color:#222">Yes</div>
<div class="a" style="left:2px;top:394px;width:236px;height:14px;background:#e9e8e4"></div>
<div class="a" style="left:15px;top:407px;width:223px;height:1px;background:#dcdcdc"></div>
<div class="a" style="left:67.5px;top:394px;width:1px;height:14px;background:#dcdcdc"></div>
<div class="t" style="left:17.5px;top:396.4px;color:#222">Auto Height</div>
<div class="a" style="left:70.5px;top:395.8px;width:9px;height:9.5px;background:#fff;border:1px solid #cfcfcf;border-radius:1px"></div>
<div class="t" style="left:83px;top:396.4px;color:#222">No</div>
<div class="a" style="left:2px;top:408px;width:236px;height:14px;background:#ffffff"></div>
<div class="a" style="left:15px;top:421px;width:223px;height:1px;background:#dcdcdc"></div>
<div class="a" style="left:67.5px;top:408px;width:1px;height:14px;background:#dcdcdc"></div>
<div class="t" style="left:17.5px;top:410.4px;color:#222">Auto Scale ...</div>
<div class="a" style="left:70.5px;top:409.8px;width:9px;height:9.5px;background:#fff;border:1px solid #cfcfcf;border-radius:1px"></div>
<div class="t" style="left:83px;top:410.4px;color:#222">No</div>
<div class="a" style="left:2px;top:422px;width:236px;height:14px;background:#e9e8e4"></div>
<div class="a" style="left:15px;top:435px;width:223px;height:1px;background:#dcdcdc"></div>
<div class="a" style="left:67.5px;top:422px;width:1px;height:14px;background:#dcdcdc"></div>
<div class="t" style="left:17.5px;top:424.4px;color:#222">Axial Offset</div>
<div class="t" style="left:70.7px;top:424.4px;color:#222;letter-spacing:-0.1px">0.00 in</div>
<div class="a" style="left:2px;top:436px;width:236px;height:14px;background:#ffffff"></div>
<div class="a" style="left:15px;top:449px;width:223px;height:1px;background:#dcdcdc"></div>
<div class="a" style="left:67.5px;top:436px;width:1px;height:14px;background:#dcdcdc"></div>
<div class="t" style="left:17.5px;top:438.4px;color:#222">Base</div>
<div class="a" style="left:2px;top:450px;width:236px;height:14px;background:#e9e8e4"></div>
<div class="a" style="left:15px;top:463px;width:223px;height:1px;background:#dcdcdc"></div>
<div class="a" style="left:67.5px;top:450px;width:1px;height:14px;background:#dcdcdc"></div>
<div class="t" style="left:17.5px;top:452.4px;color:#222">Cant</div>
<div class="t" style="left:70.7px;top:452.4px;color:#222;letter-spacing:-0.1px">0.00°</div>
<div class="a" style="left:2px;top:464px;width:236px;height:14px;background:#ffffff"></div>
<div class="a" style="left:15px;top:477px;width:223px;height:1px;background:#dcdcdc"></div>
<div class="a" style="left:67.5px;top:464px;width:1px;height:14px;background:#dcdcdc"></div>
<div class="t" style="left:17.5px;top:466.4px;color:#222">Comment</div>
<div class="a" style="left:2px;top:478px;width:236px;height:14px;background:#e9e8e4"></div>
<div class="a" style="left:15px;top:491px;width:223px;height:1px;background:#dcdcdc"></div>
<div class="a" style="left:67.5px;top:478px;width:1px;height:14px;background:#dcdcdc"></div>
<div class="t" style="left:17.5px;top:480.4px;color:#222">Description</div>
<div class="a" style="left:2px;top:492px;width:236px;height:14px;background:#ffffff"></div>
<div class="a" style="left:15px;top:505px;width:223px;height:1px;background:#dcdcdc"></div>
<div class="a" style="left:67.5px;top:492px;width:1px;height:14px;background:#dcdcdc"></div>
<div class="t" style="left:17.5px;top:494.4px;color:#222">Fillet Cross ...</div>
<div class="t" style="left:70.7px;top:494.4px;color:#222;letter-spacing:-0.1px">round</div>
<div class="a" style="left:238.5px;top:296px;width:9.5px;height:210px;background:#e6e6e6"></div>
<div class="a" style="left:239px;top:305.5px;width:9px;height:42px;background:linear-gradient(90deg,#f6f6f6,#ffffff)"></div>
<div class="a" style="left:239px;top:347px;width:9px;height:1px;background:#9a9a9a"></div>
<div class="a" style="left:238.8px;top:296.5px;width:9px;height:9px;background:#fff;border:1px solid #8a8a8a"></div>
<div class="a" style="left:238.8px;top:495.5px;width:9px;height:9px;background:#fff;border:1px solid #8a8a8a"></div>
<svg style="left:0;top:0" width="1" height="1"><path d="M241 302.5h5l-2.5-2.5z" fill="#333"/><path d="M241 499.3h5l-2.5 2.5z" fill="#333"/></svg>
<div class="a" style="left:1px;top:507px;width:32.5px;height:15px;background:#e6e6e6;border:1px solid #d4d4d4;border-top:none"></div>
<div class="a" style="left:33.5px;top:506.5px;width:32px;height:17px;background:#fbfbfb;border:1px solid #d4d4d4;border-top:none"></div>
<div class="t" style="left:8px;top:509.8px;color:#333">View</div>
<div class="t" style="left:41.2px;top:511px;color:#222">Data</div><div class="a" style="left:254px;top:82px;width:485px;height:421px;background:linear-gradient(#333366,#9797ab)"></div>
<div class="a" style="left:738px;top:82px;width:1px;height:421px;background:#7070c8"></div>
<div class="a" style="left:739px;top:82px;width:1px;height:421px;background:#fafafa"></div>
<svg style="left:0;top:0" width="1" height="1">
<!-- fin -->
<polygon points="323.8,302.9 329.3,297.6 522.5,233.2 636.2,271 668.2,410.9 662.9,415.3" fill="#bdfcb7"/>
<polygon points="323.8,302.9 329.3,297.6 522.5,233.2 517.6,238.5" fill="#d2ffcc"/>
<polygon points="517.6,238.5 522.5,233.2 636.2,271 631,275.9" fill="#dcffd8"/>
<polygon points="631,275.9 636.2,271 668.2,410.9 662.9,415.3" fill="#b6f9ae"/>
<g fill="none" stroke="#3cf03a" stroke-width="1.3" stroke-linejoin="round">
<path d="M323.8 302.9L517.6 238.5L631 275.9L662.9 415.3Z"/>
<path d="M329.3 297.6L522.5 233.2L636.2 271L668.2 410.9"/>
<path d="M323.8 302.9L329.3 297.6M517.6 238.5L522.5 233.2M631 275.9L636.2 271M662.9 415.3L668.2 410.9"/>
</g>
<!-- navcube -->
<g fill="#6d6d9b">
<polygon points="682.6,94.3 689.9,86.4 697.2,94.3"/>
<polygon points="646.8,130 655,123 655,137"/>
<polygon points="733,130 724.8,123 724.8,137"/>
<polygon points="682.6,164.6 689.9,172.8 697.2,164.6"/>
<circle cx="728.1" cy="91.4" r="4"/>
<path d="M659.5 101.5Q666 94 677 91.2L678.2 95.2Q669.5 97.5 664 103.5L667.2 105.5 657.6 107.8 659 99.6z"/>
<path d="M720.3 101.5Q714 94 703 91.2L701.8 95.2Q710.5 97.5 716 103.5L712.8 105.5 722.4 107.8 721 99.6z"/>
</g>
<polygon points="664,124 671.1,113 687.2,102.1 708.4,108.5 715.5,122 711.6,146.5 692.3,158.1 667.9,147.8" fill="#6c6c99" stroke="#444468" stroke-width="0.8"/>
<g fill="none" stroke="#444468" stroke-width="0.8">
<path d="M671.1 118.2L697.5 122.7L709 110.4M665.3 125.2L690.4 129.1L693.6 136.2L701.3 133.6L700.7 125.2L697.5 122.7M700.7 125.2L714.8 119.5M693.6 136.2L692.3 154.8M701.3 133.6L700 152.9M671.1 113L671.1 118.2L665.3 125.2M690.4 129.1L697.5 122.7"/>
</g>
<g font-family="Liberation Sans" fill="#46466c">
<text x="0" y="0" transform="translate(682.3,112.8) rotate(15) skewX(-10)" font-size="6.8">TOP</text>
<text x="0" y="0" transform="translate(666.3,135.2) rotate(12) skewX(-6)" font-size="6.6">FRONT</text>
<text x="0" y="0" transform="translate(703.8,143.5) rotate(-62)" font-size="5.6">RIGHT</text>
</g>
<path d="M713.8 157.5l5.5-2.3 6.9 2v8.5l-5.5 2.3-6.9-2z" fill="#6d6d9b" stroke="#4c4c74" stroke-width="0.4"/>
<path d="M713.8 157.5l6.9 2v8.5M720.7 159.5l5.5-2.3" fill="none" stroke="#4c4c74" stroke-width="0.4"/>
<!-- navcube axes -->
<path d="M658.6 153.5V125.5" stroke="#2a2ad0" stroke-width="0.6"/>
<path d="M658.6 153.5L688 163.6" stroke="#c02828" stroke-width="0.6"/>
<path d="M658.6 153.5L675 137.5" stroke="#40c040" stroke-width="0.5"/>
<!-- corner axis -->
<path d="M717.3 482.2V472" stroke="#7878d8" stroke-width="0.9"/>
<path d="M715.4 473.9L717.2 468.8 719 473.9z" fill="#2a2ae6"/>
<path d="M717.3 482.2L723.5 476.3" stroke="#40c840" stroke-width="0.9"/>
<path d="M719.8 479.4L723.6 476" stroke="#28d828" stroke-width="1.9"/>
<path d="M717.3 482.2L730.5 486.6" stroke="#d84040" stroke-width="0.9"/>
<path d="M725.2 484.2L730.8 486.6 724.8 487.6z" fill="#e82020"/>
<g font-family="Liberation Sans" font-size="5.4" font-weight="bold" fill="#111">
<text x="717.8" y="468">Z</text><text x="723" y="475.8">Y</text><text x="731.4" y="486.8">X</text>
</g>
</svg>
<div class="t" style="left:863.4px;top:83.0px;color:#333;">Tasks</div>
<svg style="left:0;top:0" width="1" height="1">
<rect x="1000.5" y="84.5" width="7" height="7" fill="none" stroke="#777" stroke-width="0.9"/><path d="M1000.5 86.8h7" stroke="#777" stroke-width="0.9"/>
<rect x="1014.5" y="86.8" width="5.2" height="4.8" fill="none" stroke="#777" stroke-width="0.9"/><path d="M1016.5 86.8v-2.3h5.3v5h-2.1" fill="none" stroke="#777" stroke-width="0.9"/>
</svg>
<div class="a" style="left:799.4px;top:99.5px;width:53.4px;height:16.3px;background:linear-gradient(#fdfdfd,#ececec);border:1px solid #b4b4b4;border-radius:2px"></div>
<div class="t" style="left:820.5px;top:103.0px;color:#222;">OK</div>
<div class="a" style="left:856.4px;top:99.5px;width:53.4px;height:16.3px;background:linear-gradient(#fdfdfd,#ececec);border:1px solid #b4b4b4;border-radius:2px"></div>
<div class="t" style="left:871.8px;top:103.0px;color:#222;">Cancel</div>
<div class="a" style="left:914px;top:99.5px;width:53.5px;height:16.3px;background:linear-gradient(#fdfdfd,#ececec);border:1px solid #b4b4b4;border-radius:2px"></div>
<div class="t" style="left:930.3px;top:103.0px;color:#222;">Apply</div>
<svg style="left:752.5px;top:130px" width="11" height="12" viewBox="0 0 11 12">
<rect x="2.4" y="2.4" width="6" height="7.2" fill="#fff"/>
<path d="M0.3 0.4H9.4V3.2L8.4 2.6H2.6V9.4L1.3 11.2H0.3Z" fill="#e24550"/>
<path d="M3.6 4H7.6L9.2 2.2 9.4 4.4 8.2 5.4H9.4L8 7.2H9.2L7.6 9H5.6L3.2 11.4H2.2L3.6 9.6Z" fill="#3b8ae0"/><path d="M4.6 5.6h2.6M4.6 7.6h2" stroke="#6aaaf0" stroke-width="0.6"/>
</svg>
<div class="t" style="left:766px;top:131.2px;color:#111;font-weight:bold">Fin Parameter</div>
<svg style="left:0;top:0" width="1" height="1"><path d="M997.2 138.2l3.3-3.3 3.3 3.3" fill="none" stroke="#555" stroke-width="1"/><path d="M750.5 145.3H1007" stroke="#c8c8c8" stroke-width="1"/></svg>
<div class="a" style="left:1013.5px;top:122px;width:10.5px;height:402px;background:#fdfdfd;border-left:1px solid #dcdcdc"></div>
<div class="a" style="left:1014px;top:371.5px;width:10px;height:143px;background:#e0e0e0;border-top:1px solid #8c8c8c"></div>
<div class="a" style="left:1014px;top:122px;width:9.5px;height:10.3px;background:#fff;border:1px solid #8a8a8a;"></div>
<div class="a" style="left:1014px;top:513.8px;width:9.5px;height:9.7px;background:#fff;border:1px solid #8a8a8a;"></div>
<svg style="left:0;top:0" width="1" height="1"><path d="M1016.3 128.6h5l-2.5-2.5z" fill="#333"/><path d="M1016.3 517.5h5l-2.5 2.5z" fill="#333"/></svg>
<div class="a" style="left:756px;top:172.4px;width:245.0px;height:357.6px;background:#fbfbfb;border:1px solid #d6d6d6;border-left-color:#fbfbfb"></div>
<div class="a" style="left:756.5px;top:155.5px;width:43.2px;height:18.0px;background:#fbfbfb;border:1px solid #d6d6d6;border-bottom:none;border-radius:2px 2px 0 0"></div>
<div class="t" style="left:764.5px;top:160.0px;color:#333;">General</div>
<div class="a" style="left:799.7px;top:157.3px;width:43.7px;height:15.6px;background:linear-gradient(#f0f0f0,#e6e6e6);border:1px solid #d0d0d0;border-radius:2px 2px 0 0"></div>
<div class="t" style="left:807.6px;top:160.8px;color:#333;">Fin Tabs</div>
<div class="a" style="left:843.4px;top:157.3px;width:41.1px;height:15.6px;background:linear-gradient(#f0f0f0,#e6e6e6);border:1px solid #d0d0d0;border-radius:2px 2px 0 0"></div>
<div class="t" style="left:852.5px;top:160.8px;color:#333;">Scaling</div>
<div class="a" style="left:884.5px;top:157.3px;width:46.2px;height:15.6px;background:linear-gradient(#f0f0f0,#e6e6e6);border:1px solid #d0d0d0;border-radius:2px 2px 0 0"></div>
<div class="t" style="left:893px;top:160.8px;color:#333;">Material</div>
<div class="a" style="left:930.7px;top:157.3px;width:50.5px;height:15.6px;background:linear-gradient(#f0f0f0,#e6e6e6);border:1px solid #d0d0d0;border-radius:2px 2px 0 0"></div>
<div class="t" style="left:938px;top:160.8px;color:#333;">Comment</div>
<div class="t" style="left:772px;top:191.8px;color:#222;">Fin type</div>
<div class="a" style="left:824.2px;top:189px;width:124.2px;height:15.4px;background:linear-gradient(#fdfdfd,#eeeeee);border:1px solid #c0c0c0;border-radius:2px"></div>
<div class="t" style="left:827.7px;top:191.8px;color:#222;">trapezoid</div>
<svg style="left:0;top:0" width="1" height="1"><path d="M938.6 195.39999999999998h4.4l-2.2 2.2z" fill="#444"/></svg>
<div class="t" style="left:772px;top:213.5px;color:#222;">Height</div>
<div class="a" style="left:824.4px;top:209.5px;width:124.0px;height:17.8px;background:#ffffff;border:1px solid #c4c4c4;border-radius:2px"></div>
<div class="t" style="left:827.8px;top:213.5px;color:#222;">3.00 in</div>
<div class="a" style="left:952.5px;top:213.2px;width:9.5px;height:9.6px;background:#f4f4f4;border:1px solid #d8d8d8;border-radius:1px"></div>
<div class="t" style="left:965.3px;top:213.2px;color:#a0a0a0;">auto</div>
<div class="t" style="left:772px;top:235.6px;color:#222;">Span</div>
<div class="a" style="left:824.4px;top:231.7px;width:124.0px;height:17.6px;background:#efefef;border:1px solid #d4d4d4;border-radius:2px"></div>
<div class="t" style="left:827.8px;top:235.6px;color:#a6a6a6;">3.20 in</div>
<div class="t" style="left:772px;top:258.5px;color:#222;">Sweep length</div>
<div class="a" style="left:824.4px;top:254.6px;width:124.0px;height:17.6px;background:#ffffff;border:1px solid #c4c4c4;border-radius:2px"></div>
<div class="t" style="left:827.8px;top:258.5px;color:#222;">4.28 in</div>
<div class="t" style="left:772px;top:281.5px;color:#222;">Sweep angle</div>
<div class="a" style="left:824.4px;top:277.3px;width:124.0px;height:18.2px;background:#ffffff;border:1px solid #c4c4c4;border-radius:2px"></div>
<div class="t" style="left:827.8px;top:281.5px;color:#222;">54.99°</div>
<div class="t" style="left:772px;top:304.2px;color:#1a1a1a;">Fin cant</div>
<div class="a" style="left:824.4px;top:300.5px;width:124.0px;height:17.3px;background:#efefef;border:1px solid #d4d4d4;border-radius:2px"></div>
<div class="t" style="left:827.8px;top:304.2px;color:#a6a6a6;">0.00°</div>
<div class="a" style="left:772.4px;top:323.5px;width:9.1px;height:9.5px;background:#f4f4f4;border:1px solid #d8d8d8;border-radius:1px"></div>
<div class="t" style="left:784.6px;top:323.4px;color:#a0a0a0;">Fin Set</div>
<div class="a" style="left:772.4px;top:334.9px;width:212.9px;height:54.6px;background:transparent;border:1px solid #dedede;border-radius:2px"></div>
<div class="t" style="left:779.8px;top:346.6px;color:#a0a0a0;">Fin count</div>
<div class="a" style="left:824.4px;top:344.4px;width:152.5px;height:14.3px;background:#efefef;border:1px solid #d4d4d4;border-radius:2px"></div>
<div class="t" style="left:827.8px;top:346.6px;color:#a6a6a6;">3</div>
<div class="a" style="left:966.5px;top:345px;width:1px;height:13px;background:#d0d0d0"></div>
<svg style="left:0;top:0" width="1" height="1"><path d="M969.8 350l1.8-2 1.8 2M969.8 353l1.8 2 1.8-2" fill="none" stroke="#999" stroke-width="0.7"/></svg>
<div class="t" style="left:779.8px;top:367.9px;color:#a0a0a0;">Fin spacing</div>
<div class="a" style="left:824.4px;top:364px;width:152.5px;height:17.5px;background:#efefef;border:1px solid #d4d4d4;border-radius:2px"></div>
<div class="t" style="left:827.8px;top:367.9px;color:#a6a6a6;">120.00°</div>
<div class="a" style="left:772.3px;top:411.5px;width:213.2px;height:118.5px;background:#fbfbfb;border:1px solid #d6d6d6;border-left-color:#fbfbfb"></div>
<div class="a" style="left:772.4px;top:393.8px;width:45.6px;height:18.7px;background:#fbfbfb;border:1px solid #d6d6d6;border-bottom:none;border-radius:2px 2px 0 0"></div>
<div class="t" style="left:780.8px;top:398.5px;color:#333;">Fin Root</div>
<div class="a" style="left:818px;top:395.5px;width:39.9px;height:16.5px;background:linear-gradient(#f0f0f0,#e6e6e6);border:1px solid #d0d0d0;border-radius:2px 2px 0 0"></div>
<div class="t" style="left:825.5px;top:399.6px;color:#333;">Fin Tip</div>
<div class="a" style="left:857.9px;top:395.5px;width:35.3px;height:16.5px;background:linear-gradient(#f0f0f0,#e6e6e6);border:1px solid #d0d0d0;border-radius:2px 2px 0 0"></div>
<div class="t" style="left:865.8px;top:399.6px;color:#333;">Fillets</div>
<div class="t" style="left:780.5px;top:423.4px;color:#222;">Cross section</div>
<div class="a" style="left:831.75px;top:420.5px;width:144.5px;height:15.5px;background:linear-gradient(#fdfdfd,#eeeeee);border:1px solid #c0c0c0;border-radius:2px"></div>
<div class="t" style="left:835.25px;top:423.4px;color:#222;">square</div>
<svg style="left:0;top:0" width="1" height="1"><path d="M966.45 426.95h4.4l-2.2 2.2z" fill="#444"/></svg>
<div class="t" style="left:780.5px;top:444.7px;color:#222;">Chord</div>
<div class="a" style="left:831.75px;top:440.5px;width:144.5px;height:18.2px;background:#ffffff;border:1px solid #c4c4c4;border-radius:2px"></div>
<div class="t" style="left:835.15px;top:444.7px;color:#222;">7.50 in</div>
<div class="t" style="left:780.5px;top:467.7px;color:#222;">Thickness</div>
<div class="a" style="left:831.75px;top:463.5px;width:144.5px;height:18.2px;background:#ffffff;border:1px solid #c4c4c4;border-radius:2px"></div>
<div class="t" style="left:835.15px;top:467.7px;color:#222;">0.19 in</div>
<div class="a" style="left:831.75px;top:488.5px;width:8.8px;height:9.0px;background:#f4f4f4;border:1px solid #d0d0d0;border-radius:1px"></div>
<svg style="left:0;top:0" width="1" height="1"><path d="M833.2 492.5l1.8 2.6 3.8-5" fill="none" stroke="#777" stroke-width="1.1"/></svg>
<div class="t" style="left:843.75px;top:488.3px;color:#a0a0a0;">Use percentage</div>
<div class="t" style="left:780.5px;top:508.5px;color:#222;">Length 1</div>
<div class="a" style="left:831.75px;top:504.25px;width:144.5px;height:18.2px;background:#efefef;border:1px solid #d4d4d4;border-radius:2px"></div>
<div class="t" style="left:835.15px;top:508.5px;color:#a6a6a6;">20.00</div>
<div class="a" style="left:740px;top:524px;width:284px;height:20px;background:#f0f0f0"></div>
<svg style="left:0;top:0" width="1" height="1"><rect x="893.6" y="530.8" width="5.4" height="8.2" rx="2.7" fill="none" stroke="#444" stroke-width="0.9"/><path d="M896.3 531v2.5" stroke="#444" stroke-width="0.8"/><path d="M929.2 534.2h4l-2 2z" fill="#555"/><path d="M1013.6 534.2h4l-2 2z" fill="#555"/></svg>
<div class="t" style="left:903px;top:529.3px;color:#222;">CAD</div>
<div class="t" style="left:952.2px;top:529.3px;color:#222;">9.28 in x 8.08 in</div><div class="a" style="left:254px;top:503.5px;width:62.5px;height:19px;background:#e1e1e1;border:1px solid #d2d2d2;border-top:none;border-radius:0 0 2px 2px"></div>
<div class="a" style="left:316.5px;top:503.5px;width:99px;height:20px;background:#f9f9f9;border:1px solid #d6d6d6;border-top:none;border-radius:0 0 2px 2px"></div>
<svg style="left:262.8px;top:508px" width="11" height="12" viewBox="0 0 11 12">
<rect x="2.4" y="2.4" width="6" height="7.2" fill="#fff"/>
<path d="M0.3 0.4H9.4V3.2L8.4 2.6H2.6V9.4L1.3 11.2H0.3Z" fill="#e24550"/>
<path d="M3.6 4H7.6L9.2 2.2 9.4 4.4 8.2 5.4H9.4L8 7.2H9.2L7.6 9H5.6L3.2 11.4H2.2L3.6 9.6Z" fill="#3b8ae0"/><path d="M4.6 5.6h2.6M4.6 7.6h2" stroke="#6aaaf0" stroke-width="0.6"/>
</svg>
<div class="t" style="left:275.6px;top:509.6px;color:#333">Start</div>
<div class="a" style="left:296px;top:509px;width:9.5px;height:9.5px;background:#cbcbcb;border-radius:1px"></div>
<svg style="left:0;top:0" width="1" height="1">
<path d="M298.3 511.3l5 5M303.3 511.3l-5 5" stroke="#f4f4f4" stroke-width="0.9"/>
<path d="M326.3 508.5h4.5l2 2v8h-6.5z" fill="#f6f6f6" stroke="#9a9a9a" stroke-width="0.7"/>
<circle cx="329.2" cy="514.5" r="2.4" fill="#2a5da6"/><path d="M328.6 511.6l3 0.2 0.3 2-2.3 0.3z" fill="#e02020"/>
<rect x="396" y="509.3" width="9.3" height="9.5" rx="1" fill="#ec7a55"/>
<path d="M398.3 511.7l4.7 4.7M403 511.7l-4.7 4.7" stroke="#fff" stroke-width="0.9"/>
</svg>
<div class="t" style="left:337.3px;top:510px;color:#333">FlutterTest1 : 1*</div>

</body></html>
